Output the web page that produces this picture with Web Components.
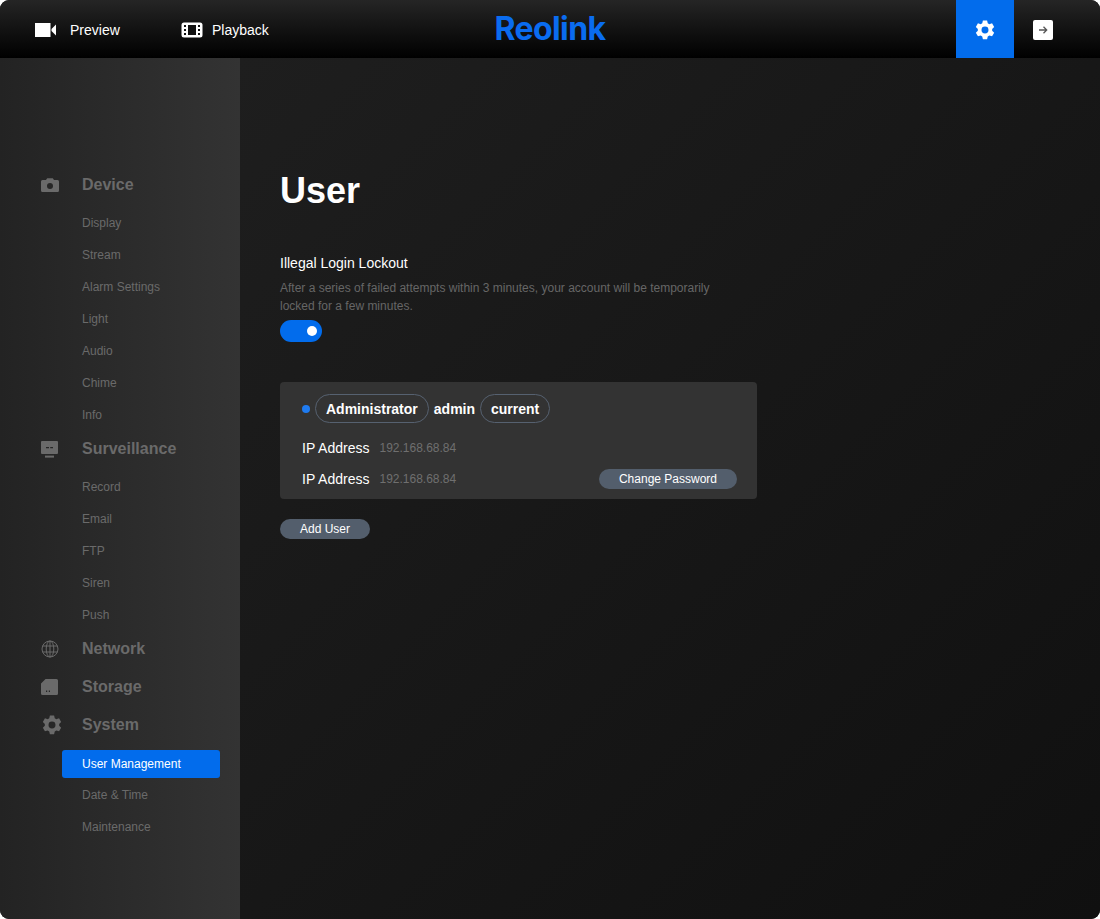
<!DOCTYPE html>
<html>
<head>
<meta charset="utf-8">
<title>Reolink</title>
<style>
html, body { margin: 0; padding: 0; background: #fff; }
body { font-family: "Liberation Sans", Arial, sans-serif; }
</style>
</head>
<body>
<rl-app>
    <rl-topbar></rl-topbar>
    <rl-sidebar></rl-sidebar>
    <rl-user-page></rl-user-page>
</rl-app>

<script>
(function () {

var ICONS = {
    video: '<svg width="26" height="16" viewBox="0 0 26 16"><rect x="0" y="1" width="15.5" height="14" fill="#fff"/><path d="M16.5 7 L21 2.5 V13.5 L16.5 9 Z" fill="#fff"/></svg>',
    film: '<svg width="22" height="16" viewBox="0 0 22 16"><rect x="0.5" y="0.5" width="21" height="15" rx="2.5" fill="#fff"/><g fill="#111"><rect x="3" y="3" width="2" height="2"/><rect x="3" y="7" width="2" height="2"/><rect x="3" y="11" width="2" height="2"/><rect x="17" y="3" width="2" height="2"/><rect x="17" y="7" width="2" height="2"/><rect x="17" y="11" width="2" height="2"/><rect x="7" y="3" width="8" height="10"/></g></svg>',
    gear: '<svg width="22" height="22" viewBox="0 0 24 24"><path fill-rule="evenodd" fill="currentColor" d="M9.7 1.6 h4.6 l.7 3 a8 8 0 0 1 1.7 1 l3-.9 2.3 4 -2.2 2.1 a8 8 0 0 1 0 2 l2.2 2.1 -2.3 4 -3-.9 a8 8 0 0 1 -1.7 1 l-.7 3 h-4.6 l-.7-3 a8 8 0 0 1 -1.7-1 l-3 .9 -2.3-4 2.2-2.1 a8 8 0 0 1 0-2 l-2.2-2.1 2.3-4 3 .9 a8 8 0 0 1 1.7-1 z M12 8.2 a3.8 3.8 0 1 0 0 7.6 a3.8 3.8 0 1 0 0-7.6 z"/></svg>',
    logout: '<svg width="20" height="20" viewBox="0 0 20 20"><rect x="0" y="0" width="20" height="20" rx="2" fill="#fff"/><path d="M6 10 H13 M10.5 6.8 L13.7 10 L10.5 13.2" fill="none" stroke="#555" stroke-width="1.3"/></svg>',
    camera: '<svg width="18" height="14" viewBox="0 0 18 14"><path fill-rule="evenodd" fill="currentColor" d="M1.5 2 H5 L6.2 0.3 H11.8 L13 2 H16.5 A1.5 1.5 0 0 1 18 3.5 V12.5 A1.5 1.5 0 0 1 16.5 14 H1.5 A1.5 1.5 0 0 1 0 12.5 V3.5 A1.5 1.5 0 0 1 1.5 2 Z M9 5 a3 3 0 1 0 0 6 a3 3 0 1 0 0-6 z"/></svg>',
    monitor: '<svg width="17" height="17" viewBox="0 0 17 17"><path fill-rule="evenodd" fill="currentColor" d="M1 0 H16 A1 1 0 0 1 17 1 V12 A1 1 0 0 1 16 13 H1 A1 1 0 0 1 0 12 V1 A1 1 0 0 1 1 0 Z M5 6 V7.2 H8 V6 Z M9.2 6 V7.2 H12 V6 Z"/><rect x="4" y="14.6" width="9" height="2" fill="currentColor"/></svg>',
    globe: '<svg width="18" height="18" viewBox="0 0 18 18"><g fill="none" stroke="currentColor" stroke-width="1"><circle cx="9" cy="9" r="8"/><ellipse cx="9" cy="9" rx="3.8" ry="8"/><path d="M9 1 V17 M1.6 6 H16.4 M1.6 12 H16.4"/></g></svg>',
    card: '<svg width="17" height="16" viewBox="0 0 17 16"><path fill-rule="evenodd" fill="currentColor" d="M4.5 0 H15.5 A1.5 1.5 0 0 1 17 1.5 V14.5 A1.5 1.5 0 0 1 15.5 16 H1.5 A1.5 1.5 0 0 1 0 14.5 V4.5 Z M5 11.5 V13 H6.2 V11.5 Z M7.8 11.5 V13 H9 V11.5 Z"/></svg>'
};

var MENU = [
    { icon: "camera", label: "Device", items: ["Display", "Stream", "Alarm Settings", "Light", "Audio", "Chime", "Info"] },
    { icon: "monitor", label: "Surveillance", items: ["Record", "Email", "FTP", "Siren", "Push"] },
    { icon: "globe", label: "Network", items: [] },
    { icon: "card", label: "Storage", items: [] },
    { icon: "gear", label: "System", items: ["User Management", "Date & Time", "Maintenance"] }
];

class RlApp extends HTMLElement {
    constructor() {
        super();
        this.attachShadow({ mode: "open" });
        this.shadowRoot.innerHTML = `
        <style>
        :host{
            display:grid;
            grid-template-columns:240px 1fr;
            grid-template-rows:58px 1fr;
            width:1100px;
            height:919px;
            border-radius:9px;
            overflow:hidden;
            background:#1a1a1a;
        }
        ::slotted(rl-topbar){
            grid-column:1 / 3;
        }
        </style>
        <slot></slot>
        `;
    }
}

class RlTopbar extends HTMLElement {
    constructor() {
        super();
        this.attachShadow({ mode: "open" });
        this.shadowRoot.innerHTML = `
        <style>
        :host{
            display:grid;
            grid-template-columns:1fr auto 1fr;
            align-items:stretch;
            height:58px;
            background:linear-gradient(180deg,#252525 0%,#000 100%);
            color:#fff;
            font-size:14px;
        }
        .left{
            display:flex;
            align-items:center;
            padding-left:35px;
        }
        .nav{
            display:flex;
            align-items:center;
        }
        .nav.preview{
            width:146px;
        }
        .nav svg{
            display:block;
            margin-right:9px;
        }
        .nav.playback svg{
            margin-right:9px;
        }
        .logo{
            font-family:Inter, sans-serif;
            font-weight:700;
            font-size:32px;
            letter-spacing:-0.6px;
            color:#0a6cf0;
            align-self:center;
            line-height:58px;
            padding-bottom:2px;
        }
        .right{
            display:flex;
            justify-content:flex-end;
            padding-right:30px;
        }
        .btn{
            display:flex;
            align-items:center;
            justify-content:center;
        }
        .settings{
            width:58px;
            background:#026cec;
        }
        .logout{
            width:58px;
            margin-right:-2px;
        }
        </style>
        <div class="left">
            <div class="nav preview">${ICONS.video}<span>Preview</span></div>
            <div class="nav playback">${ICONS.film}<span>Playback</span></div>
        </div>
        <div class="logo">Reolink</div>
        <div class="right">
            <div class="btn settings">${ICONS.gear}</div>
            <div class="btn logout">${ICONS.logout}</div>
        </div>
        `;
    }
}

class RlSidebar extends HTMLElement {
    constructor() {
        super();
        this.attachShadow({ mode: "open" });

        var html = "";
        MENU.forEach(function (group) {
            html += `<div class="head"><span class="ico">${ICONS[group.icon]}</span><span class="name">${group.label}</span></div>`;
            if (group.items.length) {
                html += '<div class="items">';
                group.items.forEach(function (item) {
                    var on = item === "User Management" ? " on" : "";
                    html += `<div class="item${on}"><span>${item.replace("&", "&amp;")}</span></div>`;
                });
                html += "</div>";
            } else {
                html += '<div class="spacer"></div>';
            }
        });

        this.shadowRoot.innerHTML = `
        <style>
        :host{
            display:block;
            padding-top:109px;
            box-sizing:border-box;
            background:linear-gradient(90deg,#232323 0%,#333 100%);
            color:#6a6a6a;
        }
        .head{
            display:flex;
            align-items:center;
            height:36px;
            padding-left:41px;
            font-size:16px;
            font-weight:bold;
        }
        .ico{
            width:41px;
            display:flex;
            align-items:center;
        }
        .ico svg{
            display:block;
        }
        .items{
            padding-top:4px;
        }
        .spacer{
            height:2px;
        }
        .item{
            display:flex;
            align-items:center;
            height:32px;
            margin-left:62px;
            width:158px;
            padding-left:20px;
            box-sizing:border-box;
            font-size:12px;
        }
        .item.on{
            height:28px;
            margin-top:3px;
            margin-bottom:1px;
            background:#026cec;
            border-radius:3px;
            color:#fff;
        }
        </style>
        ${html}
        `;
    }
}

class RlPill extends HTMLElement {
    constructor() {
        super();
        this.attachShadow({ mode: "open" });
        this.shadowRoot.innerHTML = `
        <style>
        :host{
            display:inline-flex;
            align-items:center;
            height:27px;
            padding:0 10px;
            border:1px solid #566170;
            border-radius:15px;
            font-size:14px;
            font-weight:bold;
            color:#fff;
        }
        </style>
        <slot></slot>
        `;
    }
}

class RlButton extends HTMLElement {
    constructor() {
        super();
        this.attachShadow({ mode: "open" });
        this.shadowRoot.innerHTML = `
        <style>
        :host{
            display:inline-flex;
            align-items:center;
            justify-content:center;
            height:20px;
            padding:0 20px;
            border-radius:10px;
            background:#535e6c;
            font-size:12px;
            color:#fff;
        }
        </style>
        <slot></slot>
        `;
    }
}

class RlToggle extends HTMLElement {
    constructor() {
        super();
        this.attachShadow({ mode: "open" });
        this.shadowRoot.innerHTML = `
        <style>
        :host{
            display:flex;
            align-items:center;
            justify-content:flex-end;
            width:42px;
            height:22px;
            padding-right:5px;
            box-sizing:border-box;
            border-radius:11px;
            background:#026cec;
        }
        .knob{
            width:10px;
            height:10px;
            border-radius:50%;
            background:#fff;
        }
        </style>
        <div class="knob"></div>
        `;
    }
}

class RlUserCard extends HTMLElement {
    constructor() {
        super();
        this.attachShadow({ mode: "open" });
        this.shadowRoot.innerHTML = `
        <style>
        :host{
            display:block;
            width:477px;
            height:117px;
            box-sizing:border-box;
            padding:12px 20px 0 22px;
            background:#333;
            border-radius:4px;
            color:#fff;
        }
        .top{
            display:flex;
            align-items:center;
            gap:5px;
            font-size:14px;
            font-weight:bold;
        }
        .dot{
            width:8px;
            height:8px;
            border-radius:50%;
            background:#1f7bf0;
        }
        .row{
            display:flex;
            align-items:center;
            height:31px;
            font-size:14px;
        }
        .row.first{
            margin-top:9px;
        }
        .ip{
            margin-left:10px;
            font-size:12px;
            color:#6f6f6f;
        }
        .fill{
            flex:1;
        }
        </style>
        <div class="top">
            <span class="dot"></span>
            <rl-pill>Administrator</rl-pill>
            <span>admin</span>
            <rl-pill>current</rl-pill>
        </div>
        <div class="row first"><span>IP Address</span><span class="ip">192.168.68.84</span></div>
        <div class="row"><span>IP Address</span><span class="ip">192.168.68.84</span><span class="fill"></span><rl-button>Change Password</rl-button></div>
        `;
    }
}

class RlUserPage extends HTMLElement {
    constructor() {
        super();
        this.attachShadow({ mode: "open" });
        this.shadowRoot.innerHTML = `
        <style>
        :host{
            display:block;
            padding:112px 0 0 40px;
            background:linear-gradient(135deg,#1e1e1e 0%,#101010 100%);
            color:#fff;
        }
        h1{
            margin:0;
            font-size:36px;
            line-height:42px;
            font-weight:bold;
        }
        .title{
            margin-top:41px;
            font-size:14px;
            line-height:20px;
        }
        .desc{
            margin-top:6px;
            width:440px;
            font-size:12px;
            line-height:18px;
            color:#666;
        }
        rl-toggle{
            margin-top:5px;
        }
        rl-user-card{
            margin-top:40px;
        }
        rl-button{
            margin-top:20px;
        }
        </style>
        <h1>User</h1>
        <div class="title">Illegal Login Lockout</div>
        <div class="desc">After a series of failed attempts within 3 minutes, your account will be temporarily locked for a few minutes.</div>
        <rl-toggle></rl-toggle>
        <rl-user-card></rl-user-card>
        <rl-button>Add User</rl-button>
        `;
    }
}

customElements.define("rl-app", RlApp);
customElements.define("rl-topbar", RlTopbar);
customElements.define("rl-sidebar", RlSidebar);
customElements.define("rl-pill", RlPill);
customElements.define("rl-button", RlButton);
customElements.define("rl-toggle", RlToggle);
customElements.define("rl-user-card", RlUserCard);
customElements.define("rl-user-page", RlUserPage);

})();
</script>
</body>
</html>
